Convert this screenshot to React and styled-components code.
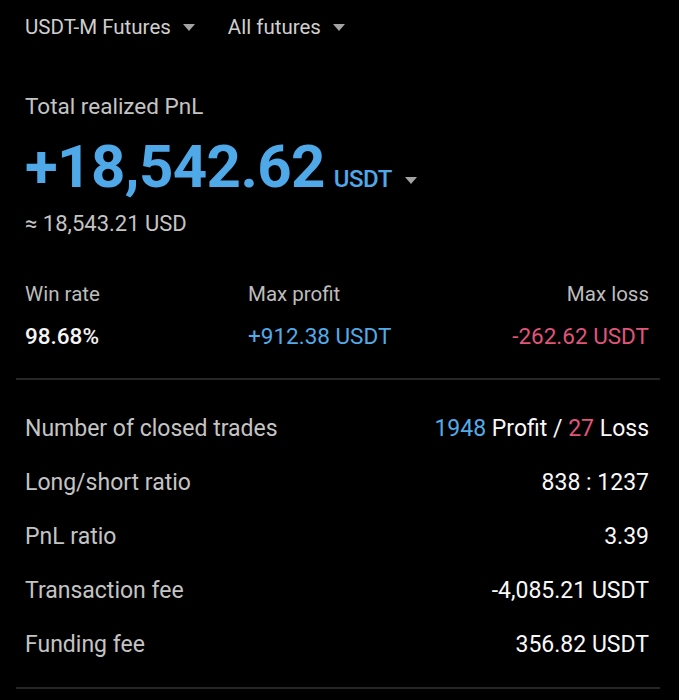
import React from "react";
import styled, { createGlobalStyle } from "styled-components";

const Global = createGlobalStyle`
  html, body {
    margin: 0;
    padding: 0;
    background: #000;
  }
  body {
    font-family: Roboto, "Noto Sans", "Liberation Sans", sans-serif;
    -webkit-font-smoothing: antialiased;
  }
`;

const Page = styled.div`
  width: 679px;
  min-height: 700px;
  background: #000;
  padding: 0 19px 0 16px;
  box-sizing: border-box;
  color: #f2f2f2;
`;

const Section = styled.div`
  padding: 0 11px 0 9px;
`;

const FilterBar = styled.div`
  height: 54px;
  display: flex;
  align-items: center;
  gap: 33px;
`;

const Filter = styled.div`
  display: flex;
  align-items: center;
  gap: 12px;
  font-size: 20.5px;
  color: #cfcfcf;
`;

const Caret = styled.span`
  display: inline-block;
  width: 0;
  height: 0;
  border-left: 6px solid transparent;
  border-right: 6px solid transparent;
  border-top: 7px solid #a3a3a3;
`;

const Title = styled.div`
  margin-top: 38px;
  font-size: 22.5px;
  line-height: 28px;
  color: #c4c4c4;
`;

const AmountRow = styled.div`
  display: flex;
  align-items: baseline;
  margin-top: 12px;
  height: 70px;
`;

const Amount = styled.span`
  font-size: 60px;
  line-height: 70px;
  font-weight: 700;
  color: #4fa9e8;
  letter-spacing: -0.6px;
`;

const Unit = styled.span`
  font-size: 24px;
  font-weight: 500;
  color: #4fa9e8;
  margin-left: 9px;
  letter-spacing: -0.5px;
`;

const UnitCaret = styled(Caret)`
  margin-left: 13px;
  align-self: center;
  margin-top: 26px;
`;

const Approx = styled.div`
  margin-top: 8px;
  font-size: 22px;
  line-height: 28px;
  color: #c4c4c4;
`;

const StatsGrid = styled.div`
  display: grid;
  grid-template-columns: 223px 1fr auto;
  margin-top: 42px;
  row-gap: 14px;
`;

const StatLabel = styled.div`
  font-size: 20.5px;
  line-height: 28px;
  color: #bdbdbd;
  text-align: ${(p) => (p.$right ? "right" : "left")};
`;

const StatValue = styled.div`
  font-size: 22.5px;
  line-height: 28px;
  font-weight: ${(p) => (p.$color ? 400 : 500)};
  color: ${(p) => p.$color || "#f4f4f4"};
  text-align: ${(p) => (p.$right ? "right" : "left")};
`;

const Divider = styled.hr`
  border: 0;
  height: 2px;
  background: #262626;
  margin: ${(p) => p.$top || 0}px 0 0;
`;

const List = styled.div`
  display: flex;
  flex-direction: column;
  padding-top: 21px;
`;

const Row = styled.div`
  height: 54px;
  display: flex;
  align-items: center;
  justify-content: space-between;
`;

const RowLabel = styled.span`
  font-size: 23px;
  color: #c4c4c4;
`;

const RowValue = styled.span`
  font-size: 23px;
  font-weight: 400;
  color: #f8f8f8;
`;

const Tint = styled.span`
  color: ${(p) => p.$color};
`;

const BLUE = "#52abe9";
const RED = "#e0557a";

const rows = [
  {
    label: "Number of closed trades",
    value: (
      <>
        <Tint $color={BLUE}>1948</Tint> Profit / <Tint $color={RED}>27</Tint> Loss
      </>
    ),
  },
  { label: "Long/short ratio", value: "838 : 1237" },
  { label: "PnL ratio", value: "3.39" },
  { label: "Transaction fee", value: "-4,085.21 USDT" },
  { label: "Funding fee", value: "356.82 USDT" },
];

export default function App() {
  return (
    <>
      <Global />
      <Page>
        <Section>
          <FilterBar>
            <Filter>
              USDT-M Futures <Caret />
            </Filter>
            <Filter>
              All futures <Caret />
            </Filter>
          </FilterBar>

          <Title>Total realized PnL</Title>
          <AmountRow>
            <Amount>+18,542.62</Amount>
            <Unit>USDT</Unit>
            <UnitCaret />
          </AmountRow>
          <Approx>≈ 18,543.21 USD</Approx>

          <StatsGrid>
            <StatLabel>Win rate</StatLabel>
            <StatLabel>Max profit</StatLabel>
            <StatLabel $right>Max loss</StatLabel>
            <StatValue>98.68%</StatValue>
            <StatValue $color={BLUE}>+912.38 USDT</StatValue>
            <StatValue $color={RED} $right>
              -262.62 USDT
            </StatValue>
          </StatsGrid>
        </Section>

        <Divider $top={28} />

        <Section>
          <List>
            {rows.map((r) => (
              <Row key={r.label}>
                <RowLabel>{r.label}</RowLabel>
                <RowValue>{r.value}</RowValue>
              </Row>
            ))}
          </List>
        </Section>

        <Divider $top={16} />
      </Page>
    </>
  );
}
